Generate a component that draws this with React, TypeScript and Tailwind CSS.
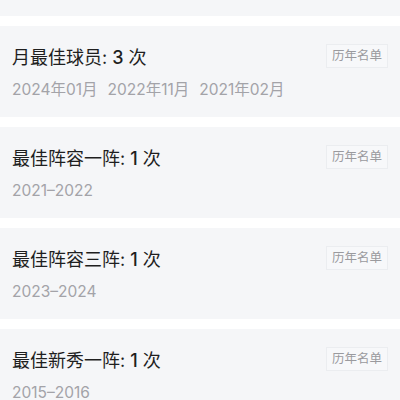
import React from 'react';

interface HonorItem {
  title: string;
  count: number;
  dates: string[];
}

const honors: HonorItem[] = [
  { title: '月最佳球员', count: 3, dates: ['2024年01月', '2022年11月', '2021年02月'] },
  { title: '最佳阵容一阵', count: 1, dates: ['2021–2022'] },
  { title: '最佳阵容三阵', count: 1, dates: ['2023–2024'] },
  { title: '最佳新秀一阵', count: 1, dates: ['2015–2016'] },
];

const HonorCard: React.FC<{ item: HonorItem }> = ({ item }) => (
  <div className="bg-[#f5f6f8] px-3 pt-[18px] pb-4">
    <div className="flex items-start justify-between">
      <div className="mt-[2px] text-[18px] leading-[24px] text-[#1f1f1f]">
        {item.title}: <span className="font-medium">{item.count}</span> 次
      </div>
      <span className="h-6 px-[5px] border border-[#ebedf0] bg-[#f7f8fa] text-[12.5px] leading-[22px] text-[#9a9a9e]">
        历年名单
      </span>
    </div>
    <div className="mt-[9px] flex gap-[10px] text-[15.5px] leading-[22px] text-[#a3a3a8]">
      {item.dates.map(d => (
        <span key={d}>{d}</span>
      ))}
    </div>
  </div>
);

export default function App() {
  return (
    <div className="w-[400px] h-[400px] overflow-hidden bg-white font-['Inter','Noto_Sans_CJK_SC',sans-serif]">
      <div className="flex flex-col gap-[10px]">
        {/* tail of the card above */}
        <div className="h-[16px] bg-[#f5f6f8]" />
        {honors.map(item => (
          <HonorCard key={item.title} item={item} />
        ))}
      </div>
    </div>
  );
}
